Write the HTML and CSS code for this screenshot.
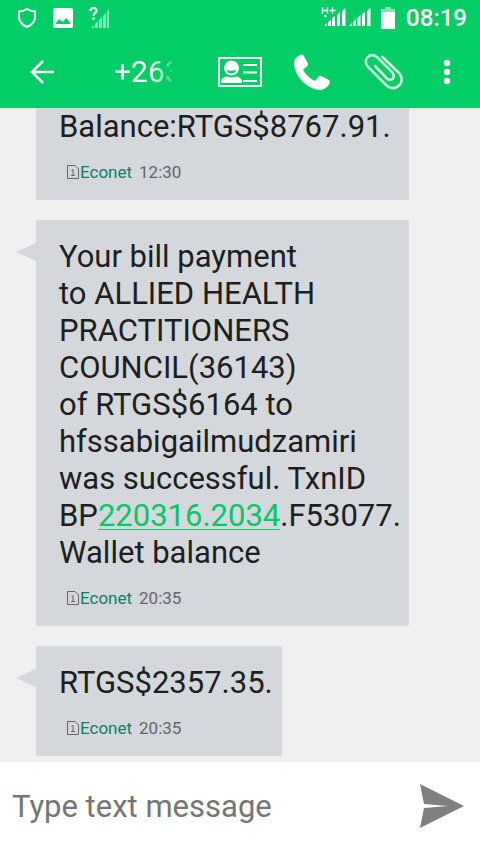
FILE: index.html
```html
<!DOCTYPE html>
<html lang="en">
<head>
<meta charset="utf-8">
<meta name="viewport" content="width=device-width, initial-scale=1">
<title>Messages</title>
<link rel="stylesheet" href="styles.css">
</head>
<body>
<header class="header">
  <div class="status">
    <svg class="status-shield" width="20" height="22" viewBox="0 0 20 22" fill="none" stroke="#fff" stroke-width="2"><path d="M10 2Q6 4.500 2 4.500V10Q2 16.500 10 20Q18 16.500 18 10V4.500Q14 4.500 10 2Z"/></svg>
    <svg width="20" height="20" viewBox="0 0 20 20"><path fill="#fff" fill-rule="evenodd" d="M2 0H18Q20 0 20 2V18Q20 20 18 20H2Q0 20 0 18V2Q0 0 2 0ZM3 16H17V14L13 10L10 14L6 11L3 15Z"/></svg>
    <svg width="22" height="24" viewBox="0 0 22 24"><g fill="#fff" opacity=".5"><path d="M2 22L5 19V22ZM6 18L9 15V22H6ZM10 14L13 11V22H10ZM14 10L17 7V22H14ZM18 6L20 3V22H18Z"/></g><path fill="none" stroke="#fff" stroke-width="2.200" d="M1.500 5Q1.500 2 4.500 2T7.500 5C7.500 7 4.500 7 4.500 10"/><path fill="#fff" d="M3.300 11.500H5.700V14H3.300Z"/></svg>
    <span class="status-space"></span>
    <svg width="50" height="24" viewBox="0 0 50 24"><path fill="none" stroke="#fff" stroke-width="1.400" d="M1.500 1V8M6.500 1V8M1.500 4.500H6.500M8.500 4.500H14.500M11.500 1.500V7.500M3 10H6"/><path fill="#fff" d="M3 20L6 17V20ZM7 16L10 14V20H7ZM11 12L14 10V20H11ZM16 9L19 6V20H16ZM21 5L24.500 2V20H21ZM28 20L31 17V20ZM32 16L35 13V20H32ZM36.500 12L39.500 9V20H36.500ZM41 8L44 5.500V20H41ZM46 5L49.500 2V20H46Z"/></svg>
    <svg width="14" height="22" viewBox="0 0 14 22"><path fill="#fff" opacity=".5" d="M4 0H10V2H14V6H0V2H4Z"/><path fill="#fff" d="M0 5H14V22H0Z"/></svg>
    <time class="clock">08:19</time>
  </div>
  <div class="toolbar">
    <button class="tool back" aria-label="Back"><svg width="24" height="24" viewBox="0 0 24 24" fill="none" stroke="#fff" stroke-width="2.600"><path d="M24 12H2M13 1L2 12L13 23"/></svg></button>
    <h1 class="title">+263</h1>
    <button class="tool" aria-label="Contact"><svg width="44" height="30" viewBox="0 0 44 30"><path fill="none" stroke="#fff" stroke-width="2" d="M1 1H43V29H1ZM25 8H39M25 15.500H39M25 24H39"/><path fill="#fff" d="M3 26V24Q4 20 9 19.500Q13.500 21.500 18 19.500Q23 20 24 24V26Z"/><circle cx="13.500" cy="11" r="7.500" fill="#fff"/><path d="M9 13Q13.500 14.500 18 13Q17 16.500 13.500 16.500T9 13Z" fill="#03cd65"/></svg></button>
    <button class="tool" aria-label="Call"><svg width="36" height="36" viewBox="0 0 36 36"><path fill="#fff" d="M1 5Q3 2 7 .5Q8.500 0 9.500 1.500L14 9.500Q14.500 11 13.500 12L9.500 15Q9 16 10 17.500Q14 23.500 20 26.500Q21 27 22 26L24.500 22.500Q25.500 21.500 27 22L35 26Q36.500 27 36 28.500Q35 32 31 34.500Q27 37 22 35.500Q5 30 .3 13Q-.5 8 1 5Z"/></svg></button>
    <button class="tool" aria-label="Attach"><svg width="40" height="38" viewBox="0 0 40 38" fill="none" stroke="#fff" stroke-width="2.600" stroke-linecap="round" opacity=".8"><path d="M18.500 4L35 20Q40 26 36 31.500Q30 38 23 33L4 14Q0 9 3 5Q7 0 13 4L28 19Q31 23 29 25.500Q26 28 23 25.500L11 13"/></svg></button>
    <button class="tool more" aria-label="More options"><svg width="8" height="26" viewBox="0 0 8 26" fill="#fff"><circle cx="4" cy="4" r="3.200"/><circle cx="4" cy="13" r="3.200"/><circle cx="4" cy="22" r="3.200"/></svg></button>
  </div>
</header>
<main class="thread">
  <article class="bubble wide">
    <p class="text">Balance:RTGS$8767.91.</p>
    <footer class="meta"><svg class="sim" width="12" height="14" viewBox="0 0 12 14"><path d="M.5 .5H8L11.500 4V13.500H.5ZM4.500 5.500L6 4.500V10M4 10.500H8"/></svg><span class="carrier">Econet</span><time>12:30</time></footer>
  </article>
  <article class="bubble wide tail">
    <p class="text">Your bill payment<br>to ALLIED HEALTH<br>PRACTITIONERS<br>COUNCIL(36143)<br>of RTGS$6164 to<br>hfssabigailmudzamiri<br>was successful. TxnID<br>BP<a href="tel:2203162034">220316.2034</a>.F53077.<br>Wallet balance</p>
    <footer class="meta"><svg class="sim" width="12" height="14" viewBox="0 0 12 14"><path d="M.5 .5H8L11.500 4V13.500H.5ZM4.500 5.500L6 4.500V10M4 10.500H8"/></svg><span class="carrier">Econet</span><time>20:35</time></footer>
  </article>
  <article class="bubble tail">
    <p class="text">RTGS$2357.35.</p>
    <footer class="meta"><svg class="sim" width="12" height="14" viewBox="0 0 12 14"><path d="M.5 .5H8L11.500 4V13.500H.5ZM4.500 5.500L6 4.500V10M4 10.500H8"/></svg><span class="carrier">Econet</span><time>20:35</time></footer>
  </article>
</main>
<form class="composer">
  <input class="field" type="text" aria-label="Message" placeholder="Type text message">
  <button class="send" type="button" aria-label="Send"><svg width="44" height="44" viewBox="0 0 44 44"><path fill="#808080" d="M0 0L44 22L0 44L4 24L28 22L4 20Z"/></svg></button>
</form>
</body>
</html>
```

FILE: styles.css
```css
* { box-sizing: border-box; }

body {
  margin: 0;
  height: 100vh;
  display: flex;
  flex-direction: column;
  background: #efefef;
  color: #1d1e20;
  font-family: Roboto, "Liberation Sans", sans-serif;
}

button {
  padding: 0;
  border: 0;
  background: none;
}

svg {
  display: block;
  flex: none;
}

.header {
  flex: none;
  position: relative;
  z-index: 1;
  background: #03cd65;
  color: #fff;
}

.status {
  display: flex;
  align-items: center;
  height: 36px;
  padding: 0 13px 0 17px;
  gap: 16px;
}

.status-space { flex: 1; }

.status svg + .clock { margin-left: -5px; }

.status-space + svg { margin-right: -6px; }

.clock {
  font-size: 24px;
  font-weight: 500;
  line-height: 36px;
}

.toolbar {
  display: flex;
  align-items: center;
  height: 72px;
  padding: 0 6px 0 18px;
}

.tool {
  display: flex;
  align-items: center;
  justify-content: center;
  flex: none;
  width: 72px;
  height: 72px;
}

.back { width: 48px; }

.more { width: 54px; }

.title {
  flex: 1;
  min-width: 0;
  margin: 0 32px 0 48px;
  overflow: hidden;
  font-size: 30px;
  font-weight: 400;
  line-height: 42px;
  white-space: nowrap;
  -webkit-mask-image: linear-gradient(to right, #000 36px, transparent 64px);
  mask-image: linear-gradient(to right, #000 36px, transparent 64px);
}

.thread {
  flex: 1;
  min-height: 0;
  display: flex;
  flex-direction: column;
  justify-content: flex-end;
  align-items: flex-start;
  gap: 20px;
  padding: 0 71px 6px 36px;
  overflow: hidden;
}

.bubble {
  flex: none;
  position: relative;
  padding: 18px 9px 18px 23px;
  border-radius: 2px;
  background: #d4d7db;
}

.wide { align-self: stretch; }

.tail::before {
  content: "";
  position: absolute;
  top: 23px;
  left: -20px;
  border: solid transparent;
  border-width: 9px 20px 9px 0;
  border-right-color: #d4d7db;
}

.text {
  margin: 0;
  font-size: 31px;
  line-height: 37px;
  white-space: nowrap;
}

.text a {
  color: #03c866;
  text-decoration-thickness: 1px;
  text-underline-offset: 3px;
}

.meta {
  display: flex;
  align-items: center;
  margin-top: 17px;
  padding-left: 8px;
  color: #636569;
  font-size: 17px;
  line-height: 20px;
}

.sim {
  fill: none;
  stroke: #636569;
}

.carrier {
  margin: 0 7px 0 1px;
  color: #08806a;
}

.composer {
  flex: none;
  display: flex;
  align-items: center;
  height: 92px;
  padding: 0 16px 4px 12px;
  background: #fff;
}

.field {
  flex: 1;
  min-width: 0;
  height: 60px;
  padding: 0;
  border: 0;
  outline: 0;
  background: none;
  color: #1d1e20;
  font: 31px Roboto, "Liberation Sans", sans-serif;
}

.field::placeholder {
  color: #757575;
  opacity: 1;
}
```
